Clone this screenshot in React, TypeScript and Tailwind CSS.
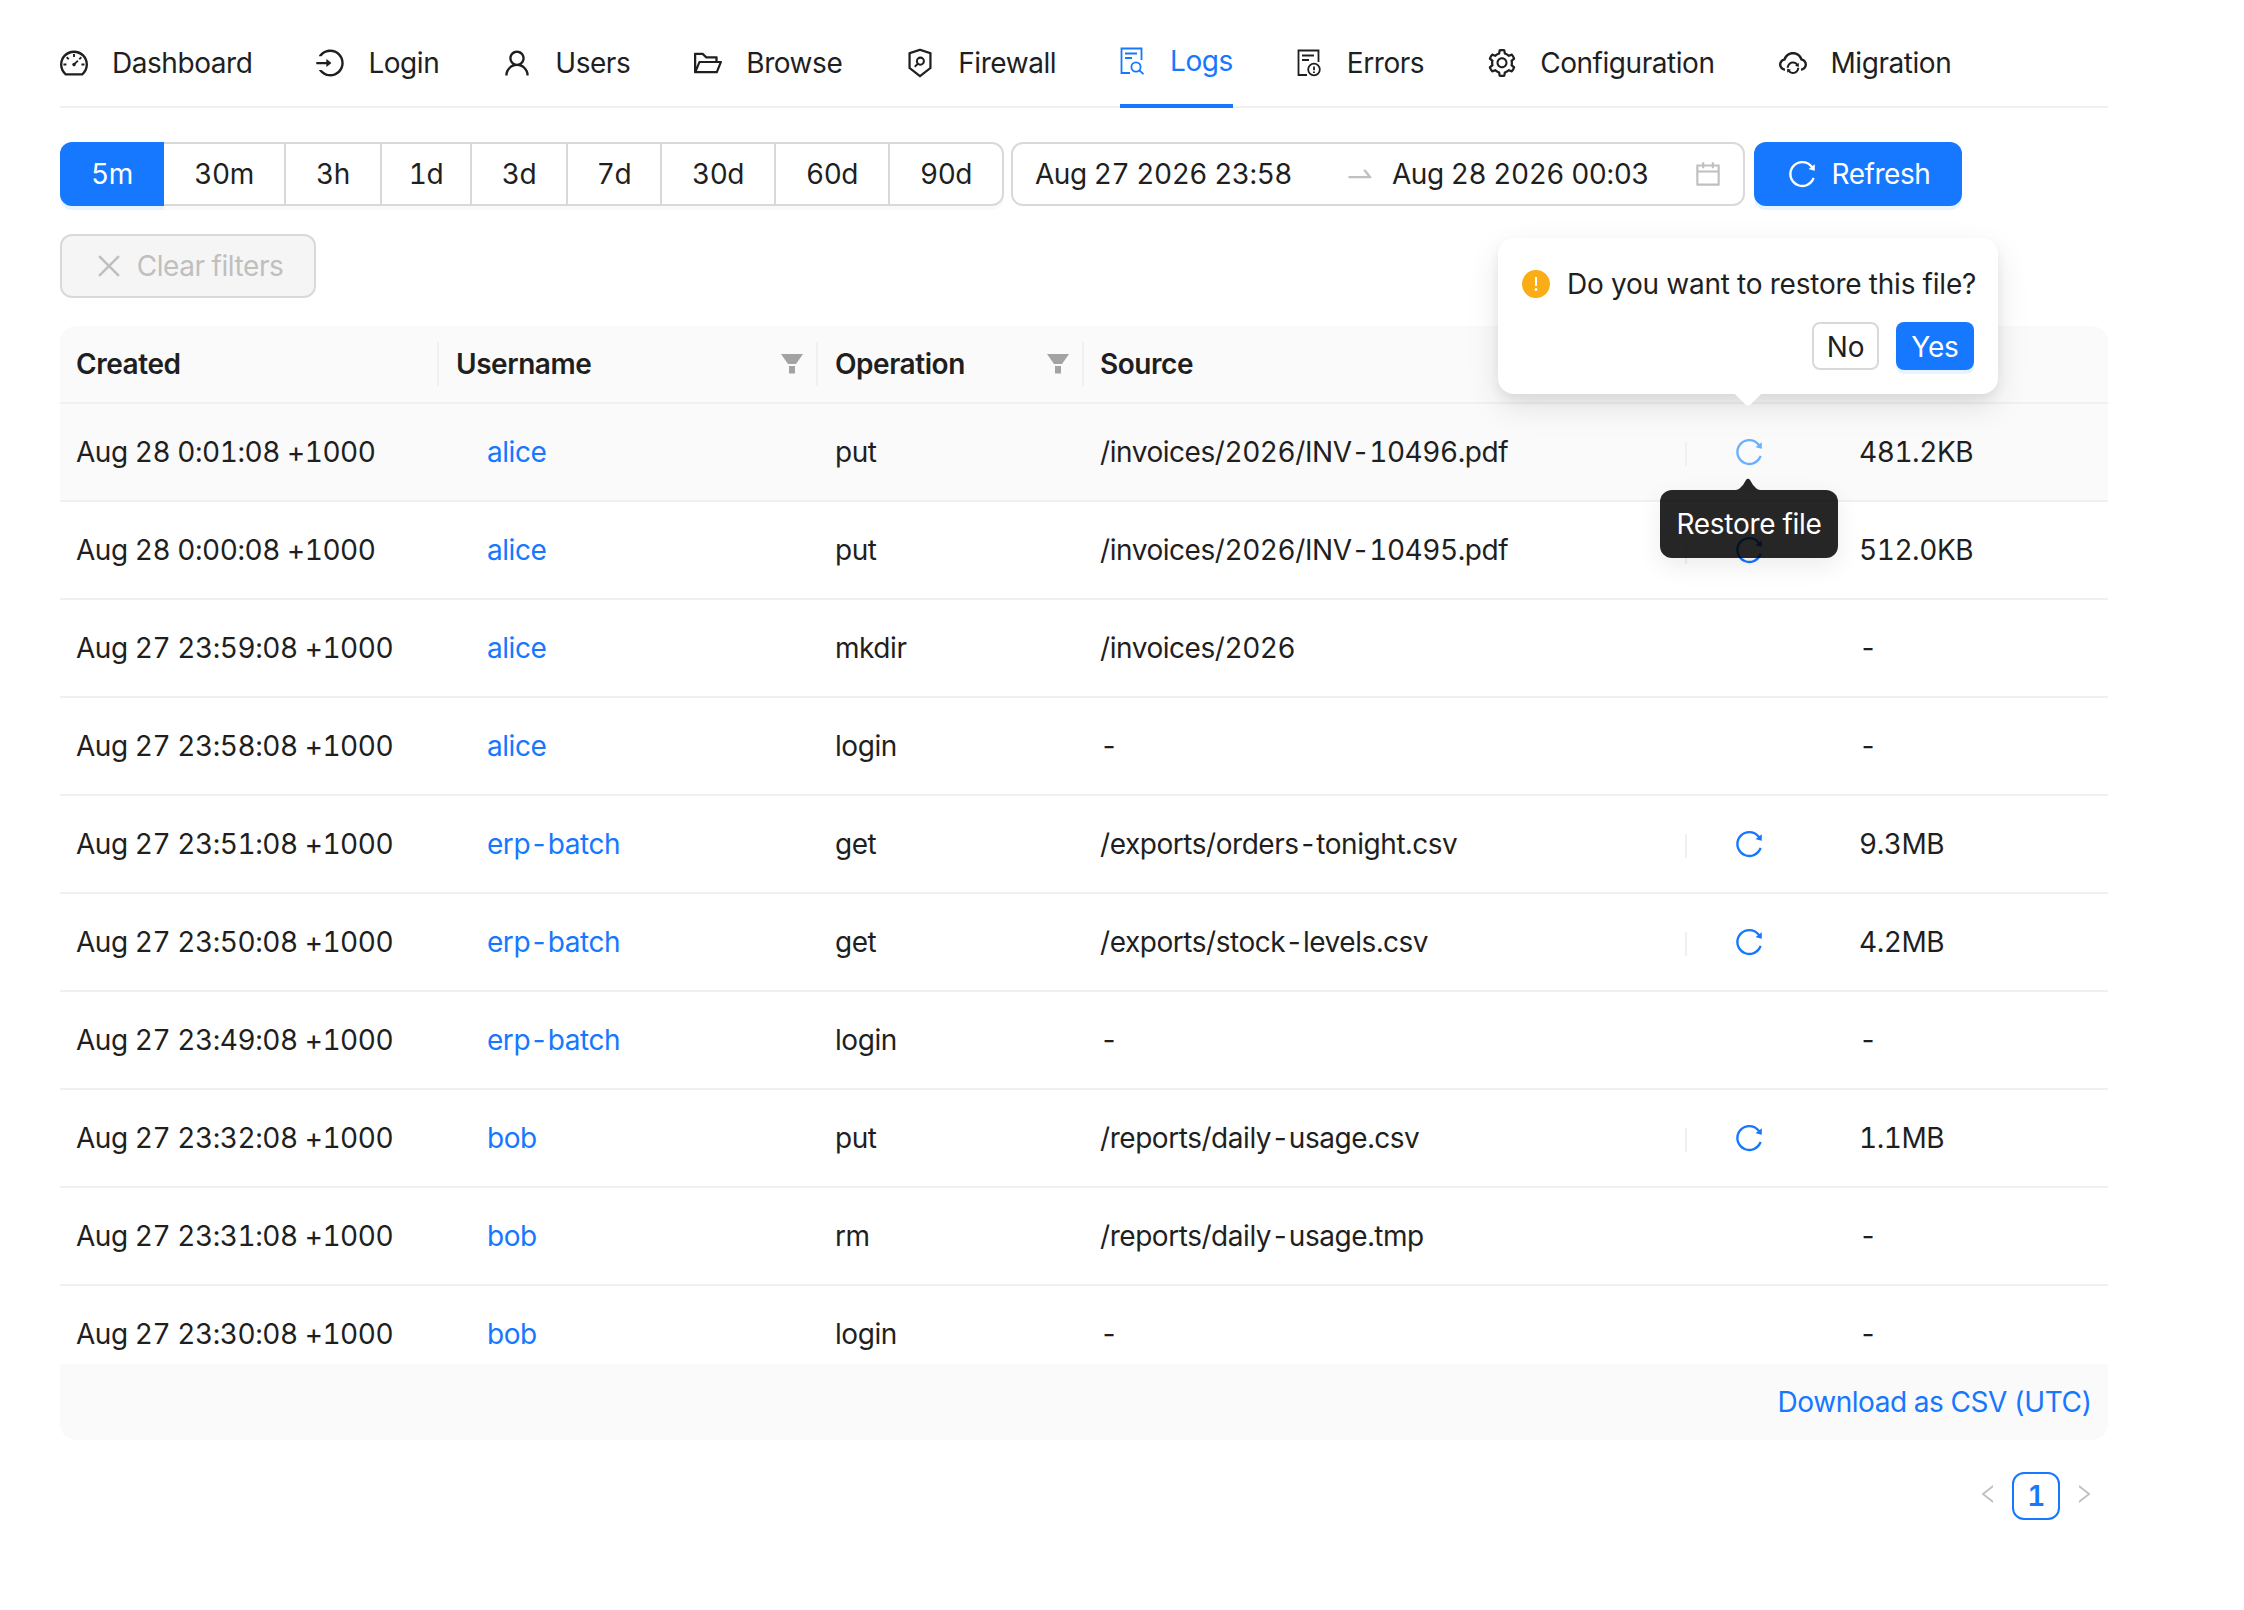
import React from "react";
import {
  AiOutlineDashboard, AiOutlineLogin, AiOutlineUser, AiOutlineFolderOpen, AiOutlineSecurityScan,
  AiOutlineSetting, AiOutlineCloudSync, AiOutlineReload,
  AiOutlineCalendar, AiOutlineSwapRight, AiOutlineClose, AiFillExclamationCircle,
  AiOutlineLeft, AiOutlineRight,
} from "react-icons/ai";

function LogsIcon() {
  return (
    <svg viewBox="0 0 24 28" className="h-7 w-6" fill="none" stroke="currentColor" strokeWidth="1.8">
      <path d="M10 26H1.5V1.5H21.5V13" />
      <path d="M5 6.5H17M5 11H12" />
      <circle cx="16" cy="20" r="4.6" />
      <path d="M19.5 23.5L23.5 27.2" />
    </svg>
  );
}

function ErrorsIcon() {
  return (
    <svg viewBox="0 0 24 28" className="h-7 w-6" fill="none" stroke="currentColor" strokeWidth="1.8">
      <path d="M10 26H1.5V1.5H21.5V13" />
      <path d="M5 6.5H17M5 11H12" />
      <circle cx="17" cy="20.5" r="5.8" />
      <path d="M17 17.5V21.2M17 22.6V24" />
    </svg>
  );
}

function TabIcon({ Icon }: { Icon: React.ComponentType<{ className?: string }> }) {
  return <Icon className="-ml-[2px] h-8 w-8" />;
}

const tabs = [
  { label: "Dashboard", icon: <TabIcon Icon={AiOutlineDashboard} />, gap: "gap-[22px]" },
  { label: "Login", icon: <TabIcon Icon={AiOutlineLogin} />, gap: "gap-[22px]" },
  { label: "Users", icon: <TabIcon Icon={AiOutlineUser} />, gap: "gap-[22px]" },
  { label: "Browse", icon: <TabIcon Icon={AiOutlineFolderOpen} />, gap: "gap-[22px]" },
  { label: "Firewall", icon: <TabIcon Icon={AiOutlineSecurityScan} />, gap: "gap-[22px]" },
  { label: "Logs", icon: <LogsIcon />, gap: "gap-[26px]", active: true },
  { label: "Errors", icon: <ErrorsIcon />, gap: "gap-[26px]" },
  { label: "Configuration", icon: <TabIcon Icon={AiOutlineSetting} />, gap: "gap-[22px]" },
  { label: "Migration", icon: <TabIcon Icon={AiOutlineCloudSync} />, gap: "gap-[22px]" },
];

const ranges = [
  { label: "5m", w: "w-[104px]" },
  { label: "30m", w: "w-[122px]" },
  { label: "3h", w: "w-[96px]" },
  { label: "1d", w: "w-[90px]" },
  { label: "3d", w: "w-[96px]" },
  { label: "7d", w: "w-[94px]" },
  { label: "30d", w: "w-[114px]" },
  { label: "60d", w: "w-[114px]" },
  { label: "90d", w: "w-[114px]" },
];

const rows = [
  ["Aug 28 0:01:08 +1000", "alice", "put", "/invoices/2026/INV-10496.pdf", true, "481.2KB"],
  ["Aug 28 0:00:08 +1000", "alice", "put", "/invoices/2026/INV-10495.pdf", true, "512.0KB"],
  ["Aug 27 23:59:08 +1000", "alice", "mkdir", "/invoices/2026", false, "-"],
  ["Aug 27 23:58:08 +1000", "alice", "login", "-", false, "-"],
  ["Aug 27 23:51:08 +1000", "erp-batch", "get", "/exports/orders-tonight.csv", true, "9.3MB"],
  ["Aug 27 23:50:08 +1000", "erp-batch", "get", "/exports/stock-levels.csv", true, "4.2MB"],
  ["Aug 27 23:49:08 +1000", "erp-batch", "login", "-", false, "-"],
  ["Aug 27 23:32:08 +1000", "bob", "put", "/reports/daily-usage.csv", true, "1.1MB"],
  ["Aug 27 23:31:08 +1000", "bob", "rm", "/reports/daily-usage.tmp", false, "-"],
  ["Aug 27 23:30:08 +1000", "bob", "login", "-", false, "-"],
] as const;

const gridCols = "grid grid-cols-[379px_379px_266px_601px_126px_1fr]";

function Sep() {
  return <span className="absolute right-0 top-4 h-[44px] w-[2px] bg-[#f0f0f0]" />;
}

function FilterIcon() {
  return (
    <svg viewBox="0 0 22 20" className="h-5 w-[22px]" fill="#a3a3a3">
      <path d="M0 0H22L15 10H7Z" />
      <path d="M8 12H14V19.5H8Z" />
    </svg>
  );
}

export default function App() {
  return (
    <div className="relative min-h-[1610px] bg-white px-[60px] font-['Inter','Liberation_Sans',sans-serif] text-[28px] leading-[44px] tracking-[-0.45px] text-[#1f1f1f] tabular-nums">
      <nav className="flex h-[108px] w-[2048px] gap-16 border-b-2 border-[#f0f0f0]">
        {tabs.map(({ label, icon, gap, active }) => (
          <div
            key={label}
            className={`flex h-[108px] items-center pt-[17px] ${gap} ${active ? "border-b-4 border-[#1677ff] text-[#1677ff]" : ""}`}
          >
            {icon}
            <span>{label}</span>
          </div>
        ))}
      </nav>

      <div className="mt-[34px] flex h-16 items-stretch">
        <div className="flex">
          {ranges.map((r, i) => (
            <div
              key={r.label}
              className={`flex items-center justify-center ${r.w} ${
                i === 0
                  ? "rounded-l-xl bg-[#1677ff] text-white shadow-[0_4px_0_rgba(5,145,255,0.1)]"
                  : `border-y-2 border-r-2 border-[#d9d9d9] shadow-[0_4px_0_rgba(0,0,0,0.02)] ${i === ranges.length - 1 ? "rounded-r-xl" : ""}`
              }`}
            >
              {r.label}
            </div>
          ))}
        </div>
        <div className="ml-[7px] flex w-[734px] items-center rounded-xl border-2 border-[#d9d9d9] pl-[22px] pr-5">
          <span className="w-[309px]">Aug 27 2026 23:58</span>
          <AiOutlineSwapRight className="h-8 w-8 text-[#bfbfbf]" />
          <span className="ml-4 flex-1">Aug 28 2026 00:03</span>
          <AiOutlineCalendar className="h-[30px] w-[30px] text-[#bfbfbf]" />
        </div>
        <div className="ml-[9px] flex w-[208px] items-center justify-center gap-[14px] rounded-xl bg-[#1677ff] text-white shadow-[0_4px_0_rgba(5,145,255,0.1)]">
          <AiOutlineReload className="h-8 w-8" />
          <span>Refresh</span>
        </div>
      </div>

      <div className="mt-7 flex h-16 w-[256px] items-center justify-center gap-3 rounded-xl border-2 border-[#d9d9d9] bg-[#f5f5f5] text-[#bfbfbf]">
        <AiOutlineClose className="h-8 w-8" />
        <span>Clear filters</span>
      </div>

      <div className="mt-7 w-[2048px] overflow-hidden rounded-t-2xl">
        <div className={`${gridCols} h-[78px] border-b-2 border-[#f0f0f0] bg-[#fafafa] font-semibold`}>
          <div className="relative flex items-center pl-4">Created<Sep /></div>
          <div className="relative flex items-center justify-between pl-[17px] pr-[15px]">
            Username
            <FilterIcon />
            <Sep />
          </div>
          <div className="relative flex items-center justify-between pl-[17px] pr-[15px]">
            Operation
            <FilterIcon />
            <Sep />
          </div>
          <div className="col-span-3 flex items-center pl-[16px]">Source</div>
        </div>
        <div className="h-[960px] overflow-hidden">
          {rows.map((r, i) => (
            <div
              key={i}
              className={`${gridCols} h-[98px] items-center border-b-2 border-[#f0f0f0] ${i === 0 ? "bg-[#fafafa]" : ""}`}
            >
              <div className="pl-4">{r[0]}</div>
              <div className="pl-[48px] text-[#1677ff]">{r[1]}</div>
              <div className="pl-[17px]">{r[2]}</div>
              <div className="pl-[16px]">{r[3]}</div>
              <div className="relative flex h-full items-center justify-center pl-[1px]">
                {r[4] && (
                  <>
                    <span className="absolute left-0 top-[38px] h-6 w-[2px] bg-[#f0f0f0]" />
                    <AiOutlineReload className={`h-8 w-8 ${i === 0 ? "text-[#69b1ff]" : "text-[#1677ff]"}`} />
                  </>
                )}
              </div>
              <div className="pl-[48px]">{r[5]}</div>
            </div>
          ))}
        </div>
        <div className="flex h-[76px] items-center justify-end rounded-b-2xl bg-[#fafafa] pr-4 text-[#1677ff]">
          Download as CSV (UTC)
        </div>
      </div>

      <div className="mt-8 flex w-[2048px] items-center justify-end gap-3 pr-3">
        <AiOutlineLeft className="mb-1 h-6 w-6 text-[#bfbfbf]" />
        <div className="flex h-12 w-12 items-center justify-center rounded-xl border-2 border-[#1677ff] font-semibold text-[#1677ff]">1</div>
        <AiOutlineRight className="mb-1 h-6 w-6 text-[#bfbfbf]" />
      </div>

      {/* popconfirm */}
      <div className="absolute left-[1498px] top-[238px] h-[156px] w-[500px] rounded-2xl bg-white tracking-[-0.2px] shadow-[0_12px_32px_rgba(0,0,0,0.1),0_6px_12px_rgba(0,0,0,0.06)]">
        <div className="absolute left-[22px] top-[24px] flex items-center gap-[15px] whitespace-nowrap">
          <AiFillExclamationCircle className="h-8 w-8 text-[#faad14]" />
          <span>Do you want to restore this file?</span>
        </div>
        <div className="absolute left-[240px] top-[145px] h-5 w-5 rotate-45 rounded-br bg-white" />
        <div className="absolute right-6 top-[84px] flex gap-[17px]">
          <div className="flex h-12 w-[67px] items-center justify-center rounded-lg border-2 border-[#d9d9d9] bg-white pt-[2px]">No</div>
          <div className="flex h-12 w-[78px] items-center justify-center rounded-lg bg-[#1677ff] pt-[2px] text-white shadow-[0_4px_0_rgba(5,145,255,0.1)]">Yes</div>
        </div>
      </div>

      {/* tooltip */}
      <div className="absolute left-[1660px] top-[490px] flex h-[68px] w-[178px] items-center justify-center whitespace-nowrap rounded-xl bg-[rgba(0,0,0,0.85)] tracking-[-0.3px] text-white shadow-[0_8px_24px_rgba(0,0,0,0.08)]">
        Restore file
        <svg viewBox="0 0 28 12" className="absolute left-[74px] top-[-12px] h-3 w-7" fill="rgba(0,0,0,0.85)">
          <path d="M0 12C5 12 6 10 9 7L12 2C13 0.4 15 0.4 16 2L19 7C22 10 23 12 28 12Z" />
        </svg>
      </div>
    </div>
  );
}
